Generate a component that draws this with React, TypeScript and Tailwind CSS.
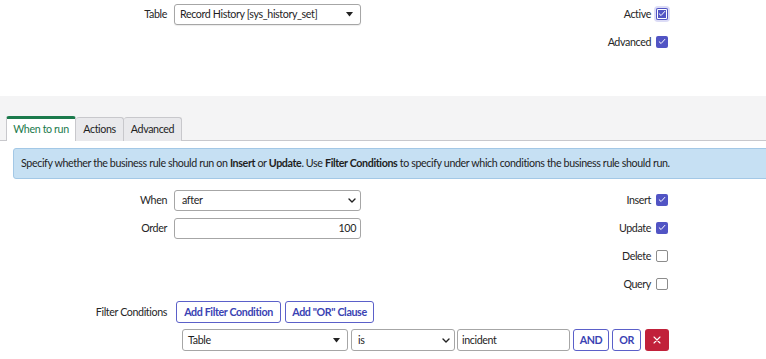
import React from "react";

const font = { fontFamily: "Lato, 'Open Sans', sans-serif" };

function Check({ checked, focus }: { checked: boolean; focus?: boolean }) {
  if (!checked) {
    return <span className="block w-[12px] h-[12px] rounded-[2px] border border-[#8c8c8c] bg-white" />;
  }
  return (
    <span
      className={
        "flex items-center justify-center w-[12px] h-[12px] rounded-[2px] bg-[#5154c4] " +
        (focus ? "ring-[2px] ring-[#dcdcf6] shadow-[inset_0_0_0_1px_#5154c4,inset_0_0_0_2px_#ffffff]" : "")
      }
    >
      <svg width="8" height="7" viewBox="0 0 8 7" fill="none">
        <path d="M1.2 3.8 L3.1 5.5 L6.8 1.4" stroke="white" strokeWidth="1" strokeLinecap="round" strokeLinejoin="round" />
      </svg>
    </span>
  );
}

function Caret() {
  return (
    <svg width="7" height="5" viewBox="0 0 7 5">
      <path d="M0 0 H7 L3.5 4.5 Z" fill="#222" />
    </svg>
  );
}

function Chevron() {
  return (
    <svg width="8" height="5" viewBox="0 0 8 5" fill="none">
      <path d="M1 1 L4 4 L7 1" stroke="#222" strokeWidth="1.4" strokeLinecap="round" strokeLinejoin="round" />
    </svg>
  );
}

function Row({
  label,
  control,
  right,
  checked,
  focus,
}: {
  label?: string;
  control?: React.ReactNode;
  right?: string;
  checked?: boolean;
  focus?: boolean;
}) {
  return (
    <div className="flex h-[28px] items-center">
      <div className="flex w-[361px] items-center">
        <div className="w-[167px] text-right text-[#262626]">{label}</div>
        <div className="ml-[7px] w-[187px]">{control}</div>
      </div>
      <div className="flex w-[307px] items-center justify-end gap-[5px]">
        {right && <span className="text-[#262626]">{right}</span>}
        {right && <Check checked={!!checked} focus={focus} />}
      </div>
    </div>
  );
}

export default function App() {
  return (
    <div
      className="w-[766px] h-[359px] overflow-hidden bg-white text-[10.7px] tracking-[-0.38px] text-[#1e1e1e]"
      style={font}
    >
      {/* top section */}
      <div className="h-[96px]">
        <Row
          label="Table"
          control={
            <div className="flex h-[21px] items-center justify-between rounded-[3px] border border-[#a6a6a6] bg-white pl-[5px] pr-[7px] shadow-[0_1px_1px_rgba(0,0,0,0.08)]">
              <span>Record History [sys_history_set]</span>
              <Caret />
            </div>
          }
          right="Active"
          checked
          focus
        />
        <Row right="Advanced" checked />
      </div>

      {/* tabs band */}
      <div className="bg-[#f4f4f5] pt-[20px]">
        <div className="flex border-b border-[#c8c8cc] pl-[6px] h-[25px]">
          <div className="flex w-[70px] justify-center items-center -mb-px h-[25px] border-t-[3px] border-t-[#1b7a4c] border-x border-x-[#c8c8cc] bg-white pb-[1px] text-[#1b7a4c] rounded-t-[3px]">
            When to run
          </div>
          <div className="flex w-[48px] justify-center items-center h-[24px] mt-px border border-l-0 border-[#c8c8cc] border-b-0 bg-[#e9e9ec] rounded-t-[3px]">
            Actions
          </div>
          <div className="flex w-[58px] justify-center items-center h-[24px] mt-px border border-l-0 border-[#c8c8cc] border-b-0 bg-[#e9e9ec] rounded-t-[3px]">
            Advanced
          </div>
        </div>
      </div>

      {/* content */}
      <div className="bg-white pt-[7px]">
        <div className="ml-[13px] w-[800px] h-[31px] flex items-center rounded-[3px] border border-[#a3c8e6] bg-[#c6e0f3] pl-[7px] text-[#1e1e1e]">
          <span>
            Specify whether the business rule should run on <b>Insert</b> or <b>Update</b>. Use{" "}
            <b>Filter Conditions</b> to specify under which conditions the business rule should run.
          </span>
        </div>

        <div className="mt-[7px]">
          <Row
            label="When"
            control={
              <div className="flex h-[21px] items-center justify-between rounded-[3px] border border-[#a6a6a6] bg-white pl-[7px] pr-[4px]">
                <span>after</span>
                <Chevron />
              </div>
            }
            right="Insert"
            checked
          />
          <Row
            label="Order"
            control={
              <div className="flex h-[21px] items-center justify-end rounded-[3px] border border-[#a6a6a6] bg-white pr-[4px]">
                <span>100</span>
              </div>
            }
            right="Update"
            checked
          />
          <Row right="Delete" checked={false} />
          <Row right="Query" checked={false} />
        </div>

        <div className="flex h-[28px] items-center">
          <div className="w-[167px] text-right text-[#262626]">Filter Conditions</div>
          <div className="ml-[9px] flex gap-[4px]">
            <button className="h-[22px] w-[105px] rounded-[3px] border border-[#5b60c9] bg-white font-bold text-[#3a42b3]">
              Add Filter Condition
            </button>
            <button className="h-[22px] w-[89px] rounded-[3px] border border-[#5b60c9] bg-white font-bold text-[#3a42b3]">
              Add "OR" Clause
            </button>
          </div>
        </div>

        <div className="flex h-[28px] items-center pl-[182px]">
          <div className="flex h-[22px] w-[166px] items-center justify-between rounded-[3px] border border-[#a6a6a6] bg-white pl-[5px] pr-[7px]">
            <span>Table</span>
            <Caret />
          </div>
          <div className="ml-[3px] flex h-[22px] w-[104px] items-center justify-between rounded-[3px] border border-[#a6a6a6] bg-white pl-[6px] pr-[4px]">
            <span>is</span>
            <Chevron />
          </div>
          <div className="ml-[2px] flex h-[22px] w-[113px] items-center rounded-[3px] border border-[#a6a6a6] bg-white pl-[4px]">
            <span>incident</span>
          </div>
          <button className="ml-[3px] h-[22px] w-[36px] rounded-[3px] border border-[#5b60c9] bg-white font-bold text-[#3a42b3]">
            AND
          </button>
          <button className="ml-[3px] h-[22px] w-[29px] rounded-[3px] border border-[#5b60c9] bg-white font-bold text-[#3a42b3]">
            OR
          </button>
          <button className="ml-[4px] flex h-[22px] w-[24px] items-center justify-center rounded-[3px] bg-[#c1213a]">
            <svg width="8" height="8" viewBox="0 0 8 8">
              <path d="M1 1 L7 7 M7 1 L1 7" stroke="white" strokeWidth="1.1" strokeLinecap="round" />
            </svg>
          </button>
        </div>
      </div>
    </div>
  );
}
